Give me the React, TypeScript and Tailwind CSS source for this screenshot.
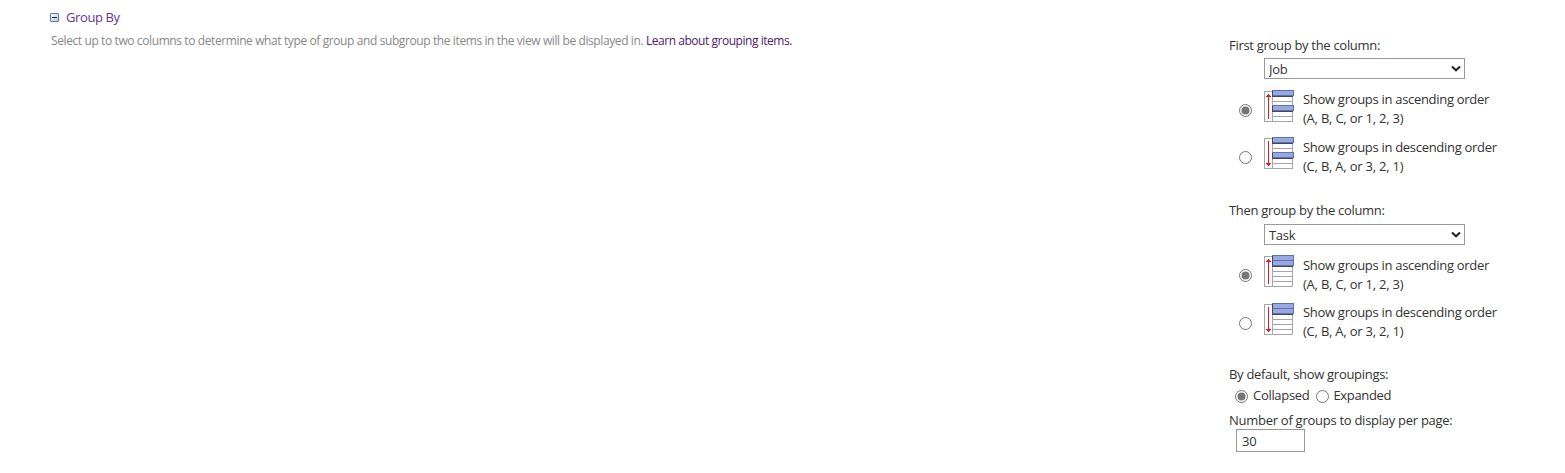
import React, { useState } from "react";

type IconProps = { descending?: boolean; nested?: boolean };

function GroupIcon({ descending, nested }: IconProps) {
  const lines = nested ? [16, 21, 26, 31] : [11, 26, 31];
  return (
    <svg width="30" height="32" viewBox="0 0 30 32" className="block shrink-0" shapeRendering="crispEdges">
      <rect x="0.5" y="1.5" width="28" height="30" fill="#fff" stroke="#a5a5aa" />
      <path d="M8.5 1V32" stroke="#a5a5aa" />
      {lines.map((y) => (
        <path key={y} d={`M8 ${y}.5H29`} stroke="#a5a5aa" />
      ))}
      {nested ? (
        <>
          <rect x="8.5" y="0.5" width="21" height="10" fill="#99a9dd" stroke="#5872bd" />
          <path d="M8 5.5H30" stroke="#5872bd" />
          <path d="M8 11.5H29M8.5 1V12" stroke="#484850" />
        </>
      ) : (
        <>
          <rect x="8.5" y="0.5" width="21" height="5" fill="#99a9dd" stroke="#5872bd" />
          <rect x="8.5" y="15.5" width="21" height="5" fill="#99a9dd" stroke="#5872bd" />
          <path d="M8 6.5H29M8.5 1V7M8 21.5H29M8.5 16V22" stroke="#484850" />
        </>
      )}
      {descending ? (
        <path d="M4.5 4V29M2 26.5H7M3 27.5H6" stroke="#ff1018" />
      ) : (
        <path d="M4.5 4V29M3 5.5H6M2 6.5H7" stroke="#ff1018" />
      )}
    </svg>
  );
}

function Radio({ name, checked, onChange, label }: { name: string; checked: boolean; onChange: () => void; label: string }) {
  return (
    <span className="relative block size-[13px] shrink-0">
      <input type="radio" name={name} aria-label={label} checked={checked} onChange={onChange} className="m-0 block size-[13px] appearance-none" />
      <svg width="13" height="13" viewBox="0 0 13 13" className="pointer-events-none absolute inset-0">
        <circle cx="6.5" cy="6.5" r="6" fill="#fff" stroke="#767676" />
        {checked && <circle cx="6.5" cy="6.5" r="4" fill="#767676" />}
      </svg>
    </span>
  );
}

function ColumnSelect({ value }: { value: string }) {
  return (
    <div className="relative ml-[35px] h-[21px] w-[201px]">
      <select defaultValue={value} className="block h-full w-full appearance-none rounded-none border border-[#999] bg-white pt-px pl-1 text-[13px] leading-[18px] outline-none">
        <option>{value}</option>
      </select>
      <svg width="10" height="7" viewBox="0 0 10 7" className="pointer-events-none absolute top-[7px] right-1">
        <path d="M1 1.5L5 5.3L9 1.5" fill="none" stroke="#222" strokeWidth="2" />
      </svg>
    </div>
  );
}

function SortOptions({ name, nested, className }: { name: string; nested?: boolean; className: string }) {
  const [order, setOrder] = useState("ascending");
  return (
    <div className={className}>
      {["ascending", "descending"].map((item) => (
        <label key={item} className="flex h-[38px] pl-[10px]">
          <span className="mt-[14px]">
            <Radio name={name} label={item} checked={order === item} onChange={() => setOrder(item)} />
          </span>
          <span className="ml-[12px]">
            <GroupIcon nested={nested} descending={item === "descending"} />
          </span>
          <span className={`ml-[9px] leading-[19px] whitespace-nowrap ${(item === "descending") !== Boolean(nested) ? "pt-px" : ""}`}>
            Show groups in {item} order
            <br />
            <span className="tracking-[-0.22px]">{item === "ascending" ? "(A, B, C, or 1, 2, 3)" : "(C, B, A, or 3, 2, 1)"}</span>
          </span>
        </label>
      ))}
    </div>
  );
}

export default function App() {
  const [collapsed, setCollapsed] = useState(true);
  return (
    <main className="flex h-[473px] w-[1565px] justify-between overflow-hidden bg-white font-['Open_Sans','Noto_Sans',sans-serif] text-[13px] tracking-[-0.3px] text-[#333]">
      <section className="pt-[8px] pl-[50px]">
        <h3 className="flex h-[19px] items-center text-[13px] tracking-[-0.4px] text-[#663399]">
          <svg width="9" height="9" viewBox="0 0 9 9" className="mr-[7px]">
            <defs>
              <linearGradient id="toggle" x1="0" y1="0" x2="1" y2="1">
                <stop offset="0" stopColor="#fff" />
                <stop offset="1" stopColor="#b5c5dc" />
              </linearGradient>
            </defs>
            <rect x="0.5" y="0.5" width="8" height="8" rx="0.5" fill="url(#toggle)" stroke="#60779e" />
            <path d="M2 4.5H7" stroke="#18243c" />
          </svg>
          Group By
        </h3>
        <p className="mt-[5px] ml-px text-[12px] leading-[18px] tracking-[-0.395px] whitespace-nowrap text-[#888]">
          Select up to two columns to determine what type of group and subgroup the items in the view will be displayed in.{" "}
          <a className="tracking-[-0.46px] text-[#4b216f]">Learn about grouping items.</a>
        </p>
      </section>
      <section className="w-[336px] pt-[36px] whitespace-nowrap">
        <div className="h-[22px] leading-[19px]">First group by the column:</div>
        <ColumnSelect value="Job" />
        <SortOptions name="first" className="mt-[11px] grid gap-[9px]" />
        <div className="mt-[26px] h-[23px] leading-[19px] tracking-[-0.3px]">Then group by the column:</div>
        <ColumnSelect value="Task" />
        <SortOptions name="second" nested className="mt-[10px] grid gap-[10px]" />
        <div className="mt-[24px] leading-[19px]">By default, show groupings:</div>
        <div className="mt-[2px] flex h-[19px] items-center pl-[6px]">
          <label className="flex items-center gap-[5px]">
            <span className="pt-[2px]">
              <Radio name="groupings" label="Collapsed" checked={collapsed} onChange={() => setCollapsed(true)} />
            </span>
            Collapsed
          </label>
          <label className="ml-[6px] flex items-center gap-[5px] tracking-[-0.35px]">
            <span className="pt-[2px]">
              <Radio name="groupings" label="Expanded" checked={!collapsed} onChange={() => setCollapsed(false)} />
            </span>
            Expanded
          </label>
        </div>
        <div className="mt-[6px] h-[18px] leading-[19px] tracking-[-0.27px]">Number of groups to display per page:</div>
        <input defaultValue="30" className="ml-[7px] block h-[23px] w-[69px] border border-[#999] px-[5px] pt-px text-[13px] outline-none" />
      </section>
    </main>
  );
}
